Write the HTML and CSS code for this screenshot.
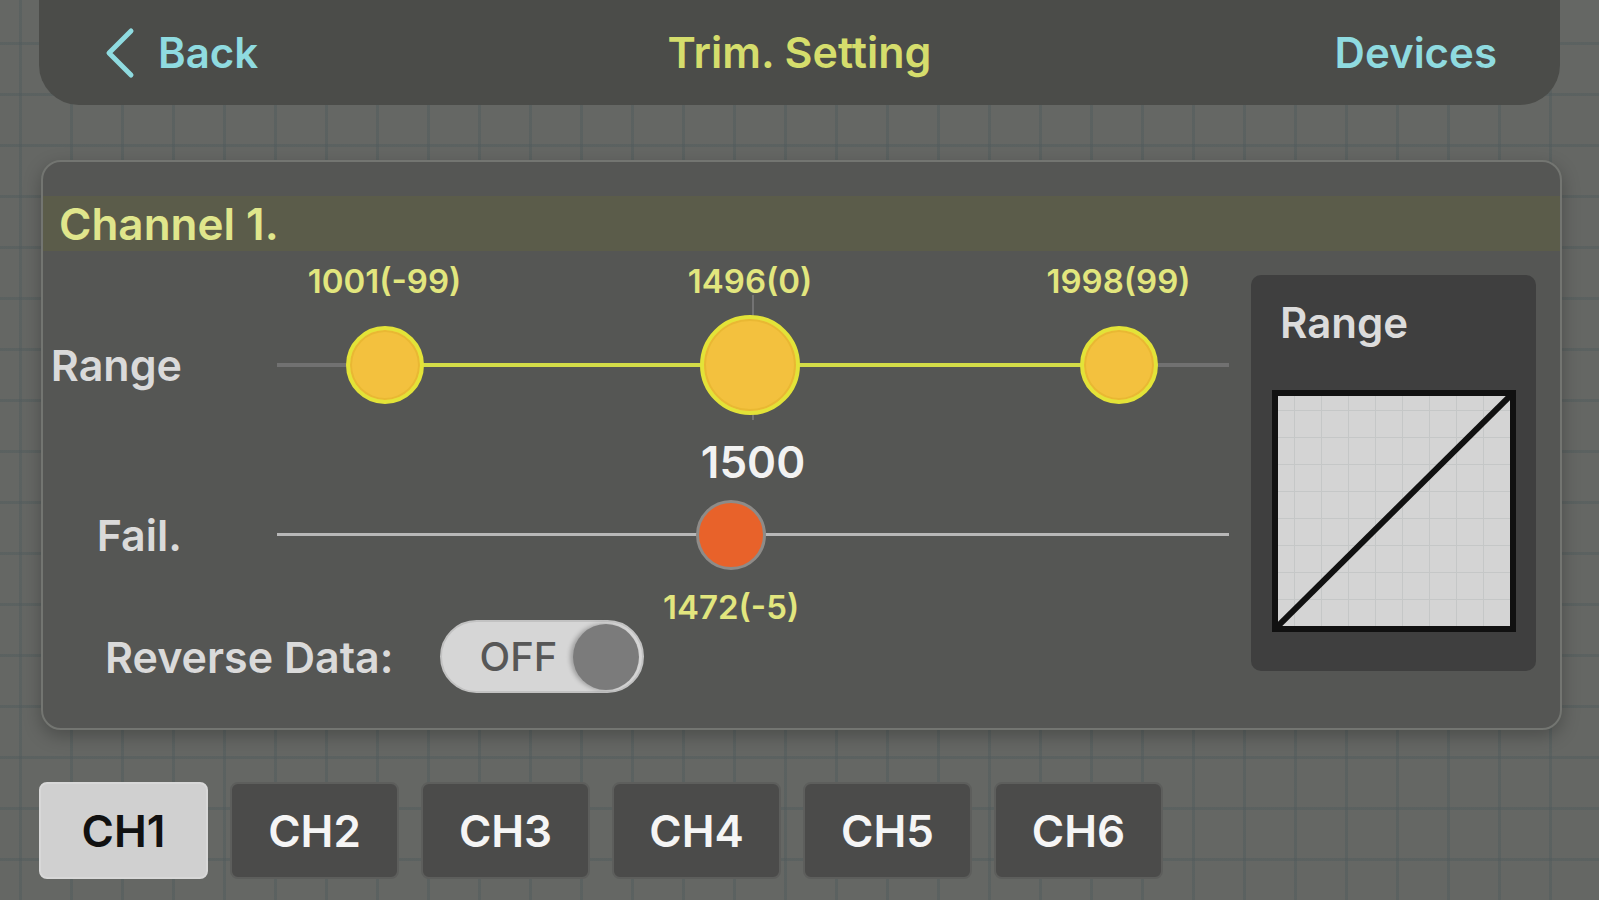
FILE: index.html
```html
<!DOCTYPE html>
<html lang="en">
<head>
<meta charset="utf-8">
<title>Trim. Setting</title>
<link rel="stylesheet" href="styles.css">
</head>
<body>
<header class="topbar">
  <a class="nav back">
    <svg class="chev" width="34" height="52" viewBox="0 0 34 52"><path d="M29 4 L7 26 L29 48" fill="none" stroke="#8fdbe0" stroke-width="5" stroke-linecap="round" stroke-linejoin="round"/></svg>
    <span>Back</span>
  </a>
  <h1 class="title">Trim. Setting</h1>
  <a class="nav devices">Devices</a>
</header>

<section class="panel">
  <div class="band">Channel 1.</div>
  <div class="content">
    <div class="sliders">
      <div class="row range-row">
        <div class="label">Range</div>
        <div class="track">
          <div class="rail"></div>
          <div class="fill" style="left:11.3%;width:77.1%"></div>
          <div class="tick"></div>
          <span class="val above" style="left:11.3%">1001(-99)</span>
          <span class="val above" style="left:49.7%">1496(0)</span>
          <span class="val above" style="left:88.4%">1998(99)</span>
          <div class="thumb yellow sm" style="left:11.3%"></div>
          <div class="thumb yellow lg" style="left:49.7%"></div>
          <div class="thumb yellow sm" style="left:88.4%"></div>
        </div>
      </div>
      <div class="row center-row">
        <div></div>
        <div class="center-val">1500</div>
      </div>
      <div class="row fail-row">
        <div class="label">Fail.</div>
        <div class="track">
          <div class="rail light"></div>
          <div class="thumb orange" style="left:47.7%"></div>
          <span class="val below" style="left:47.7%">1472(-5)</span>
        </div>
      </div>
      <div class="reverse">
        <span class="rev-label">Reverse Data:</span>
        <div class="toggle"><span class="toggle-text">OFF</span><span class="knob"></span></div>
      </div>
    </div>
    <aside class="preview">
      <div class="preview-title">Range</div>
      <div class="chart">
        <svg class="diag" viewBox="0 0 100 100" preserveAspectRatio="none"><line x1="0" y1="100" x2="100" y2="0" stroke="#111" vector-effect="non-scaling-stroke" style="stroke-width:6px"/></svg>
      </div>
    </aside>
  </div>
</section>

<nav class="tabs">
  <button class="tab active">CH1</button>
  <button class="tab">CH2</button>
  <button class="tab">CH3</button>
  <button class="tab">CH4</button>
  <button class="tab">CH5</button>
  <button class="tab">CH6</button>
</nav>
</body>
</html>
```
FILE: styles.css
```css
html, body {
  margin: 0;
  padding: 0;
}
body {
  width: 1599px;
  height: 900px;
  overflow: hidden;
  font-family: "Inter", "Noto Sans", sans-serif;
  font-weight: 600;
  background-color: #656764;
  background-image:
    linear-gradient(90deg, rgba(80, 90, 92, 0.45) 0 3px, transparent 3px),
    linear-gradient(180deg, rgba(80, 90, 92, 0.45) 0 3px, transparent 3px);
  background-size: 51px 51px;
  background-position: 19px 42px;
}

/* header */
.topbar {
  margin: 0 39px;
  height: 105px;
  box-sizing: border-box;
  padding: 0 63px;
  background: #4b4c49;
  border-radius: 0 0 40px 40px;
  display: grid;
  grid-template-columns: 1fr auto 1fr;
  align-items: center;
}
.nav {
  color: #8fdbe0;
  font-size: 42px;
  line-height: 1;
}
.back {
  display: flex;
  align-items: center;
  gap: 22px;
}
.chev {
  display: block;
}
.title {
  margin: 0;
  font-size: 43px;
  font-weight: 600;
  color: #d5dd6c;
  line-height: 1;
}
.devices {
  justify-self: end;
}

/* panel */
.panel {
  margin: 55px 0 0 41px;
  width: 1521px;
  height: 570px;
  box-sizing: border-box;
  border: 2px solid #737571;
  border-radius: 20px;
  background: #555654;
  padding-top: 34px;
  box-shadow: 0 6px 18px rgba(0, 0, 0, 0.25);
}
.band {
  height: 55px;
  background: #5b5c4a;
  color: #e0e68c;
  font-size: 44px;
  display: flex;
  align-items: center;
  padding-left: 16px;
}
.content {
  display: flex;
}
.sliders {
  width: 1186px;
  margin-right: 22px;
}
.row {
  display: grid;
  grid-template-columns: 234px 952px;
  align-items: center;
}
.label {
  text-align: right;
  padding-right: 95px;
  color: #dadada;
  font-size: 43px;
}
.range-row {
  margin-top: 75px;
  height: 78px;
}
.center-row {
  margin-top: 38px;
  height: 40px;
}
.fail-row {
  margin-top: 18px;
  height: 70px;
}
.track {
  position: relative;
  height: 100%;
}
.rail {
  position: absolute;
  left: 0;
  right: 0;
  top: 50%;
  height: 4px;
  margin-top: -2px;
  background: #717171;
}
.rail.light {
  height: 3px;
  background: #b8b8b8;
}
.fill {
  position: absolute;
  top: 50%;
  height: 4px;
  margin-top: -2px;
  background: #d4dd48;
}
.tick {
  position: absolute;
  left: 50%;
  top: -31px;
  height: 125px;
  width: 2px;
  margin-left: -1px;
  background: #737373;
}
.thumb {
  position: absolute;
  top: 50%;
  transform: translate(-50%, -50%);
  border-radius: 50%;
  box-sizing: border-box;
}
.thumb.yellow {
  background: #f3c13e;
  border: 4px solid #e3e338;
  box-shadow: inset 0 0 0 2px #e9b833;
}
.thumb.sm {
  width: 78px;
  height: 78px;
}
.thumb.lg {
  width: 100px;
  height: 100px;
}
.thumb.orange {
  width: 70px;
  height: 70px;
  background: #e8622a;
  border: 3px solid #8e8b88;
}
.val {
  position: absolute;
  transform: translate(-50%, -50%);
  color: #e2e67e;
  font-size: 33px;
  white-space: nowrap;
  line-height: 1;
}
.val.above {
  top: calc(50% - 84px);
}
.val.below {
  top: calc(50% + 72px);
}
.center-val {
  text-align: center;
  color: #f2f2f2;
  font-size: 44px;
  line-height: 40px;
}
.reverse {
  margin-top: 50px;
  height: 73px;
  display: flex;
  align-items: center;
  padding-left: 62px;
  gap: 46px;
}
.rev-label {
  color: #dadada;
  font-size: 43px;
}
.toggle {
  width: 204px;
  height: 73px;
  box-sizing: border-box;
  border-radius: 37px;
  background: #d6d6d6;
  border: 2px solid #c2c2c2;
  display: flex;
  align-items: center;
  padding: 0 3px 0 38px;
  justify-content: space-between;
}
.toggle-text {
  color: #575757;
  font-size: 40px;
  font-weight: 500;
}
.knob {
  width: 66px;
  height: 66px;
  border-radius: 50%;
  background: #7b7b7b;
  box-shadow: -3px 0 4px rgba(0, 0, 0, 0.25);
}

/* preview */
.preview {
  margin-top: 24px;
  width: 285px;
  height: 396px;
  box-sizing: border-box;
  background: #3f3f3f;
  border-radius: 10px;
  padding: 28px 20px 0 21px;
}
.preview-title {
  color: #dcdcdc;
  font-size: 42px;
  line-height: 40px;
  padding-left: 8px;
}
.chart {
  margin-top: 47px;
  width: 244px;
  height: 242px;
  box-sizing: border-box;
  border: 6px solid #111;
  background-color: #d4d4d4;
  background-image:
    linear-gradient(90deg, #c5c7c7 0 1px, transparent 1px),
    linear-gradient(180deg, #c5c7c7 0 1px, transparent 1px);
  background-size: 27px 27px;
  background-position: 16px 14px;
  position: relative;
}
.diag {
  display: block;
  width: 100%;
  height: 100%;
}

/* tabs */
.tabs {
  margin: 52px 0 0 39px;
  display: flex;
  gap: 22px;
}
.tab {
  width: 169px;
  height: 97px;
  box-sizing: border-box;
  border-radius: 8px;
  border: 2px solid #5d5e5c;
  background: #4b4b4a;
  color: #f5f5f5;
  font-family: "Inter", "Noto Sans", sans-serif;
  font-weight: 600;
  font-size: 44px;
  padding: 0;
}
.tab.active {
  background: #d0d0d0;
  border-color: #d8d8d8;
  color: #111;
}
```
